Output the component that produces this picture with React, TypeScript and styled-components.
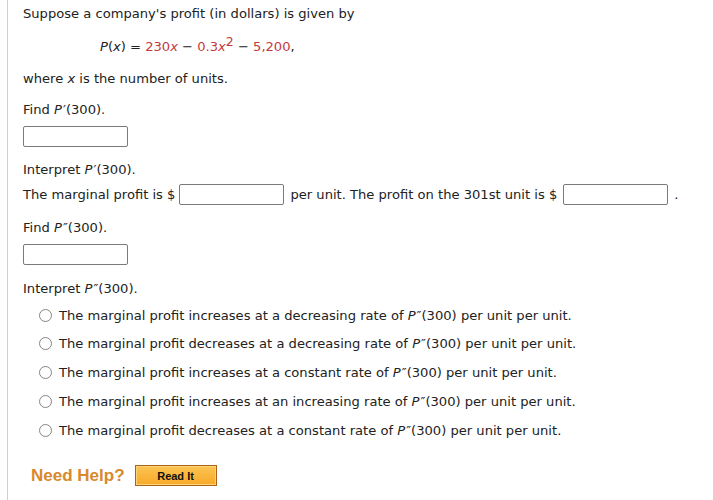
import React from 'react';
import styled, { createGlobalStyle } from 'styled-components';

const GlobalStyle = createGlobalStyle`
  html, body {
    margin: 0;
    padding: 0;
    background: #ffffff;
  }
  body {
    font-family: "DejaVu Sans", Verdana, sans-serif;
    font-size: 13.1px;
    color: #222222;
  }
`;

const Page = styled.div`
  margin-left: 7px;
  min-height: 500px;
  border-left: 1px solid #cfcfcf;
  padding: 4px 0 0 15px;
  box-sizing: border-box;
`;

const Line = styled.div<{ $top?: number; $indent?: number }>`
  line-height: 20px;
  height: 20px;
  margin-top: ${p => p.$top ?? 0}px;
  padding-left: ${p => p.$indent ?? 0}px;
  white-space: nowrap;
`;

const Var = styled.i`
  font-style: italic;
`;

const Mark = styled.span`
  padding-left: 1px;
`;

const Red = styled.span`
  color: #c33a3a;
`;

const Sup = styled.sup`
  font-size: 12.5px;
  line-height: 0;
  vertical-align: 5px;
`;

const AnswerBox = styled.input.attrs({ type: 'text' })`
  display: block;
  width: 105px;
  height: 21px;
  box-sizing: border-box;
  margin: 0;
  padding: 0 4px;
  border: 1px solid #7a7a7a;
  border-radius: 2px;
  background: #fff;
  font: inherit;
`;

const BoxBlock = styled.div<{ $top: number }>`
  margin-top: ${p => p.$top}px;
`;

const InlineRow = styled.div<{ $top: number }>`
  display: flex;
  align-items: center;
  height: 21px;
  margin-top: ${p => p.$top}px;
  white-space: nowrap;
`;

const InlineGap = styled.span<{ $left: number; $right: number }>`
  padding: 0 ${p => p.$right}px 0 ${p => p.$left}px;
`;

const Choices = styled.div`
  display: flex;
  flex-direction: column;
  gap: 8.75px;
  margin-top: 6px;
  padding-left: 16px;
`;

const Choice = styled.label`
  display: flex;
  align-items: center;
  gap: 7px;
  height: 20px;
  white-space: nowrap;
`;

const Radio = styled.span`
  width: 13px;
  height: 13px;
  box-sizing: border-box;
  border: 1px solid #858585;
  border-radius: 50%;
  background: #fff;
  flex: none;
`;

const HelpRow = styled.div`
  display: flex;
  align-items: center;
  gap: 10px;
  margin-top: 25px;
  padding-left: 8px;
`;

const HelpTitle = styled.span`
  font-family: "Liberation Sans", Arial, sans-serif;
  font-weight: bold;
  font-size: 17px;
  color: #d8892c;
`;

const ReadButton = styled.button`
  width: 82px;
  height: 21px;
  box-sizing: border-box;
  border: 1px solid #a86418;
  box-shadow: inset 0 0 0 1px #fcd27a;
  background: linear-gradient(#fcc453, #f7a928);
  font-family: "Liberation Sans", Arial, sans-serif;
  font-weight: bold;
  font-size: 11px;
  color: #111;
  padding: 0;
  cursor: pointer;
`;

const PPrime = ({ marks }: { marks: string }) => (
  <>
    <Var>P</Var>
    <Mark>{marks}</Mark>
  </>
);

const choices = [
  'increases at a decreasing',
  'decreases at a decreasing',
  'increases at a constant',
  'increases at an increasing',
  'decreases at a constant',
];

export default function App() {
  return (
    <>
      <GlobalStyle />
      <Page>
        <Line>Suppose a company's profit (in dollars) is given by</Line>
        <Line $top={13} $indent={77}>
          <Var>P</Var>(<Var>x</Var>) = <Red>230<Var>x</Var></Red> − <Red>0.3<Var>x</Var><Sup>2</Sup></Red> − <Red>5,200</Red>,
        </Line>
        <Line $top={12}>
          where <Var>x</Var> is the number of units.
        </Line>
        <Line $top={11}>
          Find <PPrime marks="′" />(300).
        </Line>
        <BoxBlock $top={6}>
          <AnswerBox />
        </BoxBlock>
        <Line $top={13}>
          Interpret <PPrime marks="′" />(300).
        </Line>
        <InlineRow $top={4}>
          The marginal profit is $
          <InlineGap $left={4} $right={6}><AnswerBox /></InlineGap> per unit. The profit on the 301st unit is $
          <InlineGap $left={6} $right={6}><AnswerBox /></InlineGap> .
        </InlineRow>
        <Line $top={13}>
          Find <PPrime marks="″" />(300).
        </Line>
        <BoxBlock $top={6}>
          <AnswerBox />
        </BoxBlock>
        <Line $top={14}>
          Interpret <PPrime marks="″" />(300).
        </Line>
        <Choices>
          {choices.map(c => (
            <Choice key={c}>
              <Radio />
              <span>
                The marginal profit {c} rate of <PPrime marks="″" />(300) per unit per unit.
              </span>
            </Choice>
          ))}
        </Choices>
        <HelpRow>
          <HelpTitle>Need Help?</HelpTitle>
          <ReadButton>Read It</ReadButton>
        </HelpRow>
      </Page>
    </>
  );
}
